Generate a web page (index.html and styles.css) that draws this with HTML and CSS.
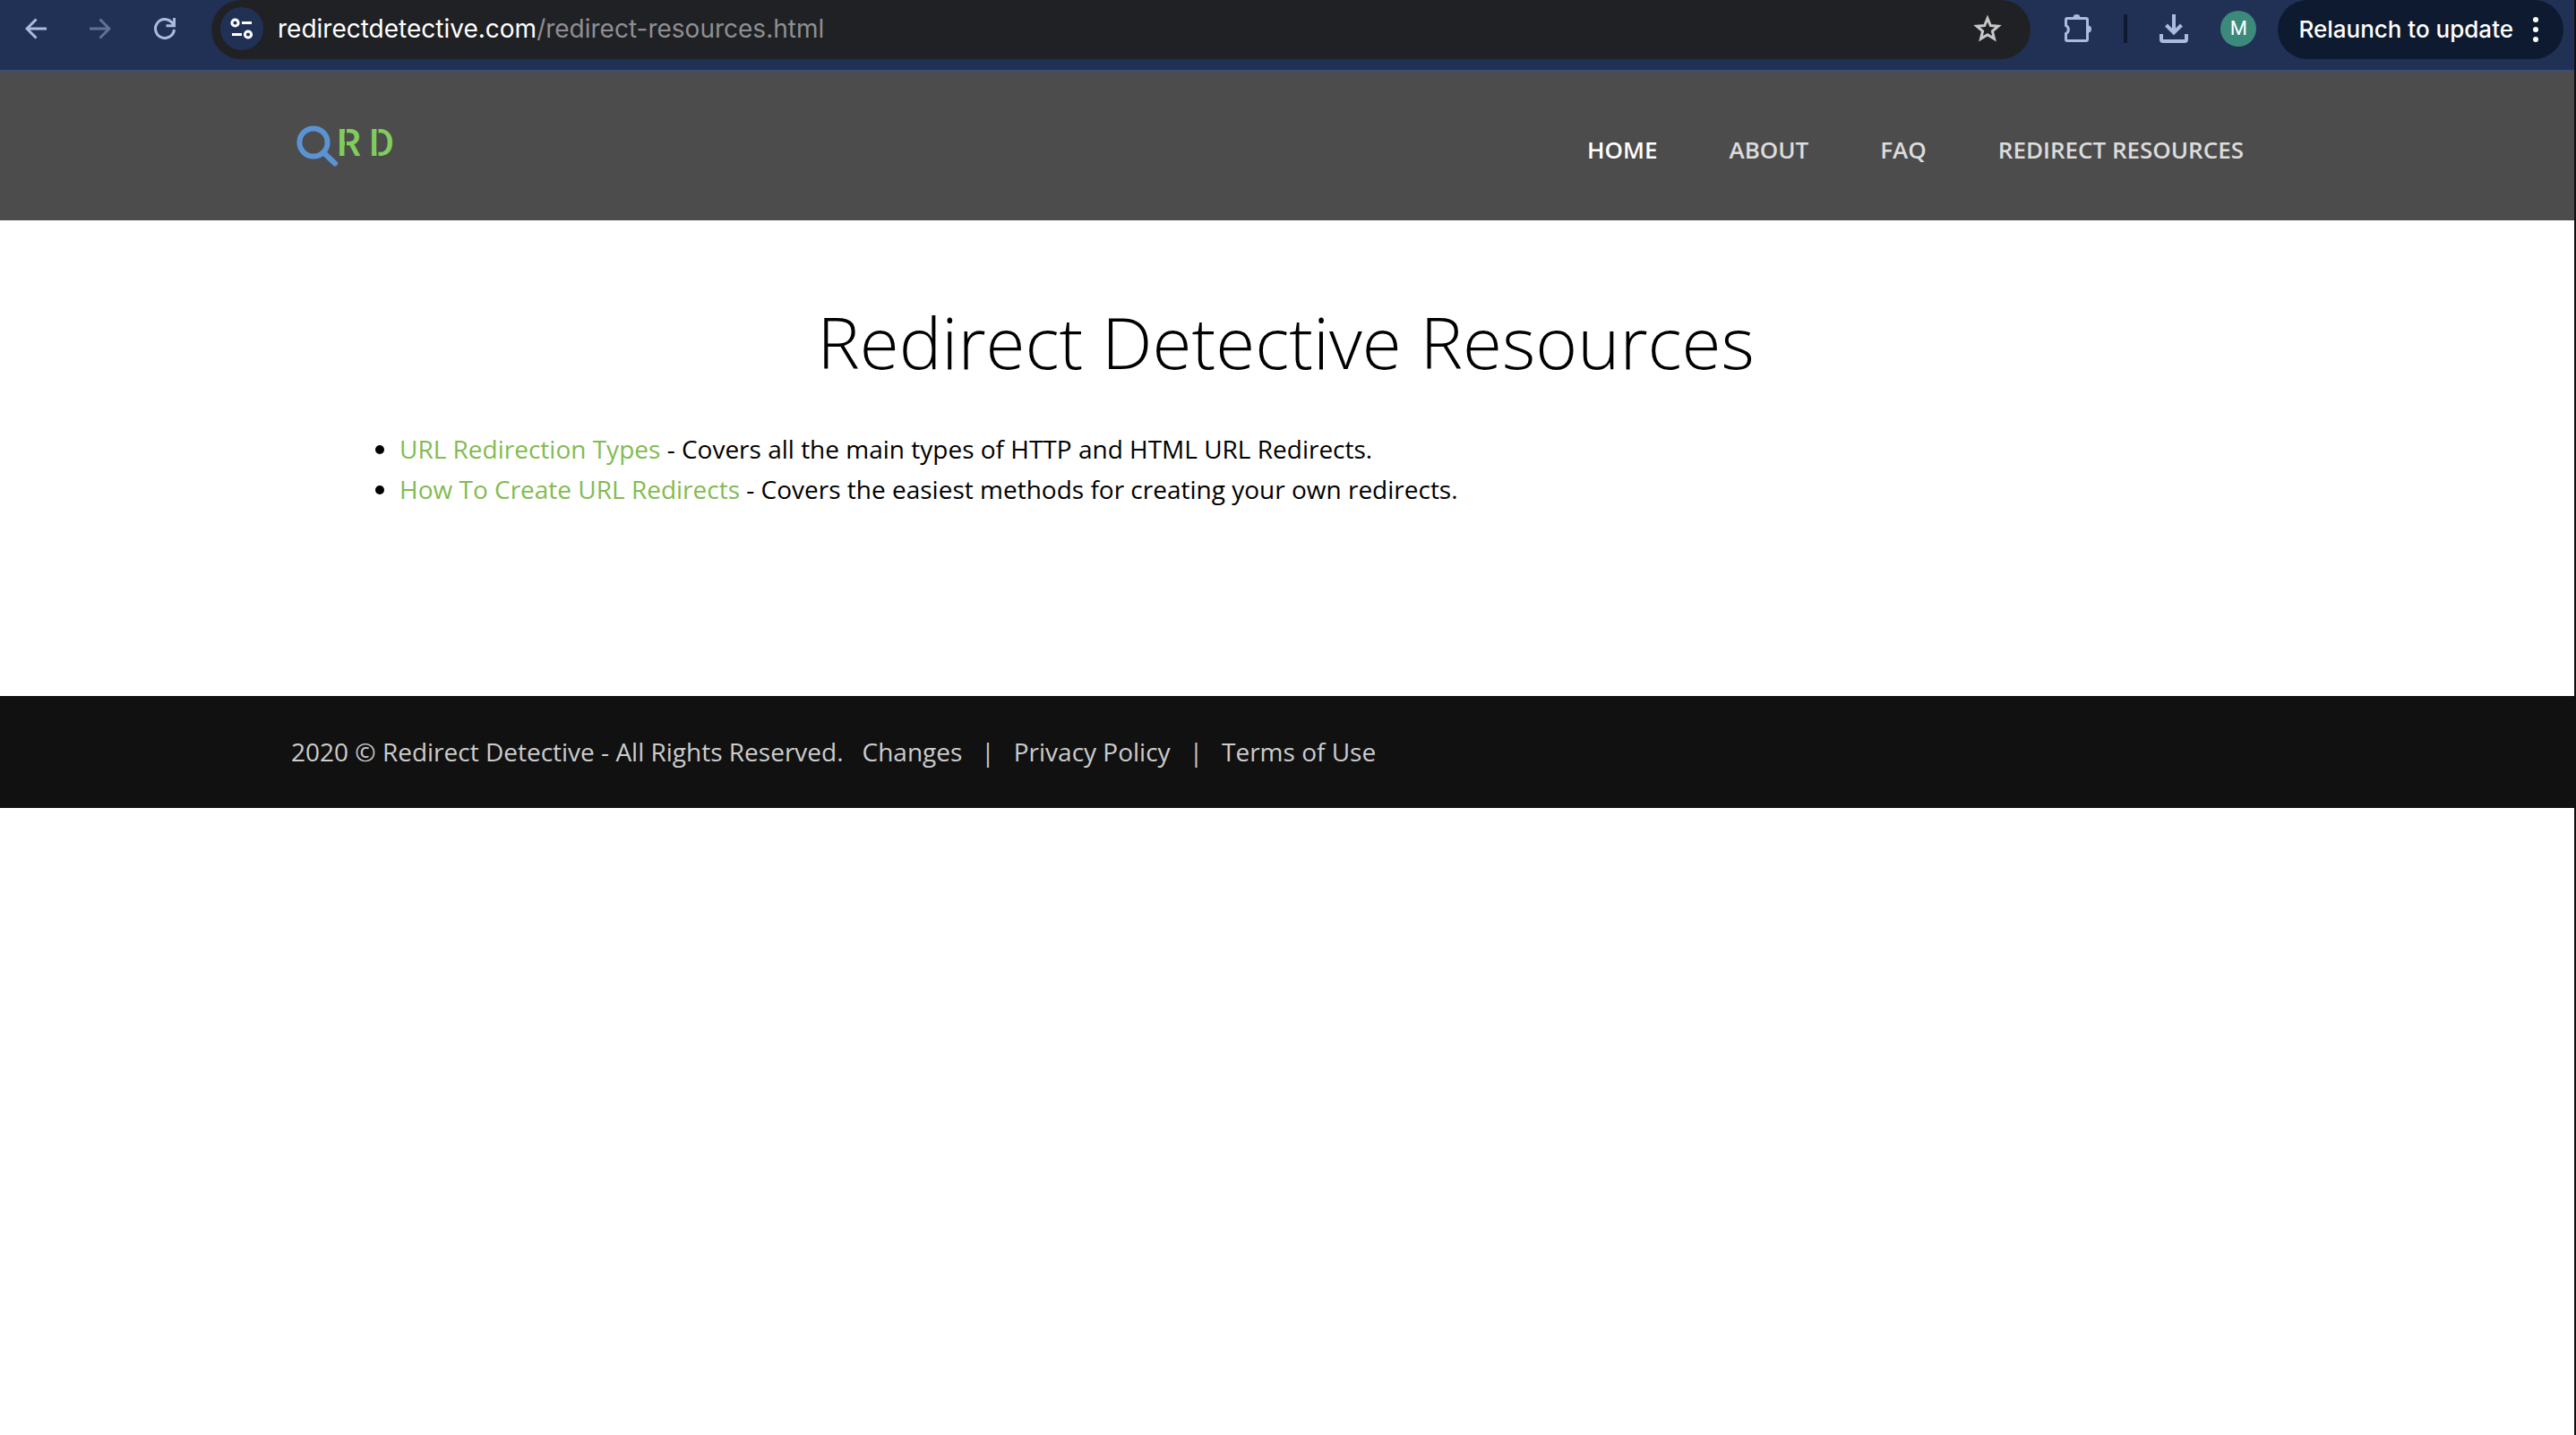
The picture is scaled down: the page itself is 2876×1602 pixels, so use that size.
FILE: index.html
```html
<!DOCTYPE html>
<html lang="en">
<head>
<meta charset="utf-8">
<title>Redirect Detective Resources</title>
<link rel="stylesheet" href="styles.css">
</head>
<body>
<div class="toolbar">
  <div class="nav-buttons">
    <button class="icon-btn" aria-label="Back"><svg width="24" height="24" viewBox="0 0 24 24"><path d="M24 12H2M12.500 1.500 2 12l10.500 10.500" /></svg></button>
    <button class="icon-btn dim" aria-label="Forward"><svg width="24" height="24" viewBox="0 0 24 24"><path d="M0 12h22M11.500 1.500 22 12 11.500 22.500" /></svg></button>
    <button class="icon-btn" aria-label="Reload"><svg width="24" height="24" viewBox="0 0 24 24"><path d="M22.500 13A10.500 10.500 0 1 1 19.500 4.600L22 7.500M22.600 0V8.700H13.500" /></svg></button>
  </div>
  <div class="omnibox">
    <button class="site-info" aria-label="Site information"><svg width="26" height="24" viewBox="0 0 26 24"><circle cx="5.500" cy="5.500" r="3.600"/><circle cx="20" cy="18.500" r="3.600"/><path d="M13 5.500h11M2 18.500h11"/></svg></button>
    <div class="url"><span class="domain">redirectdetective.com</span>/redirect-resources.html</div>
    <button class="icon-btn star" aria-label="Bookmark this page"><svg width="32" height="32" viewBox="0 0 32 32"><path d="M16 4.500 19.300 12.500 28 13.200 21.400 18.800 23.500 27.300 16 22.700 8.500 27.300 10.600 18.800 4 13.200 12.700 12.500Z"/></svg></button>
  </div>
  <div class="actions">
    <button class="icon-btn" aria-label="Extensions"><svg width="34" height="34" viewBox="0 0 34 34"><path d="M5 5.500H26a1.500 1.500 0 0 1 1.500 1.500V29a1.500 1.500 0 0 1-1.500 1.500H5A1.500 1.500 0 0 1 3.500 29V22.500a5 5 0 0 0 0-9V7A1.500 1.500 0 0 1 5 5.500Z"/><path class="solid" d="M11.500 5a4 4 0 0 1 8 0ZM28 13.500a4 4 0 0 1 0 8Z"/></svg></button>
    <span class="divider"></span>
    <button class="icon-btn bold" aria-label="Downloads"><svg width="32" height="32" viewBox="0 0 32 32"><path d="M16 0V20M7.500 12 16 20.500 24.500 12M2 22V28a2 2 0 0 0 2 2H28a2 2 0 0 0 2-2V22"/></svg></button>
    <button class="avatar" aria-label="Profile">M</button>
    <button class="relaunch">Relaunch to update<svg width="6" height="28" viewBox="0 0 6 28"><circle cx="3" cy="3" r="3"/><circle cx="3" cy="14" r="3"/><circle cx="3" cy="25" r="3"/></svg></button>
  </div>
</div>
<header class="site-header">
  <div class="container header-row">
    <a class="logo" href="#" aria-label="Redirect Detective">
      <svg width="132" height="60" viewBox="0 0 132 60">
        <circle class="lens" cx="25" cy="23" r="15.600"/>
        <path class="handle" d="M36 34 49 46.500"/>
        <text x="51" y="38">R</text><text x="87" y="38">D</text>
        <path class="cut" d="M61 4V40M96.500 4V40"/>
      </svg>
    </a>
    <nav class="menu">
      <a class="active" href="#">HOME</a>
      <a href="#">ABOUT</a>
      <a href="#">FAQ</a>
      <a href="#">REDIRECT RESOURCES</a>
    </nav>
  </div>
</header>
<main class="container">
  <h1>Redirect Detective Resources</h1>
  <ul class="resources">
    <li><a href="#">URL Redirection Types</a> - Covers all the main types of HTTP and HTML URL Redirects.</li>
    <li><a href="#">How To Create URL Redirects</a> - Covers the easiest methods for creating your own redirects.</li>
  </ul>
</main>
<footer class="site-footer">
  <div class="container footer-row">
    <span>2020 © Redirect Detective - All Rights Reserved.</span>
    <nav class="legal">
      <a href="#">Changes</a><span>|</span><a href="#">Privacy Policy</a><span>|</span><a href="#">Terms of Use</a>
    </nav>
  </div>
</footer>
</body>
</html>
```
FILE: styles.css
```css
* { box-sizing: border-box; }
html { background: #fff; }
body {
  margin: 0;
  min-height: 100vh;
  border-right: 2px solid #111;
  font: 400 28px/45px "Open Sans", sans-serif;
  color: #000;
}
a { text-decoration: none; color: inherit; }
button { border: 0; padding: 0; background: none; font: inherit; color: inherit; }
svg { display: block; }

.toolbar {
  display: flex;
  align-items: flex-start;
  height: 80px;
  background: #213156;
  border-bottom: 2px solid #3c4d72;
  font: 400 28px/36px Inter, sans-serif;
}
.nav-buttons { display: flex; gap: 48px; padding: 20px 40px 0 28px; }
.icon-btn { color: #a9bce0; }
.icon-btn svg { fill: none; stroke: currentColor; stroke-width: 3; }
.icon-btn .solid { fill: currentColor; stroke: none; }
.icon-btn.dim { color: #5f7196; }
.icon-btn.bold svg { stroke-width: 4; }
.omnibox {
  flex: 1;
  display: flex;
  align-items: center;
  height: 66px;
  padding: 0 32px 2px 10px;
  background: #202124;
  border-radius: 33px;
}
.site-info {
  display: flex;
  align-items: center;
  justify-content: center;
  width: 48px;
  height: 48px;
  border-radius: 50%;
  background: #213156;
}
.site-info svg { fill: none; stroke: #fff; stroke-width: 3; }
.url { flex: 1; margin-left: 16px; color: #8e8f93; }
.domain { color: #fff; }
.star { color: #c7c7c7; }
.actions { display: flex; align-items: center; height: 64px; padding: 0 12px 0 36px; }
.divider { width: 4px; height: 32px; margin: 0 36px 0 34px; background: #0d1a30; }
.avatar {
  width: 40px;
  height: 40px;
  margin: 0 24px 0 36px;
  border-radius: 50%;
  background: #3c8a7b;
  color: #fff;
  font: 400 22px/40px Roboto, sans-serif;
}
.relaunch {
  display: flex;
  align-items: center;
  gap: 22px;
  align-self: flex-start;
  height: 66px;
  padding: 0 28px 0 23px;
  border-radius: 33px;
  background: #0d1a30;
  color: #fff;
  font-size: 26px;
  font-weight: 500;
}
.relaunch svg { fill: #fff; }

.container { width: 78%; max-width: 2224px; margin: 0 auto; }
.site-header { background: #4c4c4c; }
.header-row { display: flex; justify-content: space-between; height: 166px; }
.logo { padding-top: 56px; }
.logo .lens { fill: none; stroke: #5b93d3; stroke-width: 6; }
.logo .handle { stroke: #5b93d3; stroke-width: 6; stroke-linecap: round; }
.logo text { fill: #80cd5c; font: 500 43px Roboto, sans-serif; }
.logo .cut { stroke: #4c4c4c; stroke-width: 2; }
.menu {
  display: flex;
  gap: 80px;
  padding: 65px 44px 0 0;
  color: #dcdcdc;
  font-size: 26px;
  font-weight: 600;
}
.menu .active { color: #fff; }

h1 {
  margin: 0;
  padding: 91px 3px 54px 0;
  font-size: 80px;
  line-height: 88px;
  font-weight: 300;
  text-align: center;
}
.resources { margin: 0; padding: 0 0 208px 121px; }
.resources a { color: #83bb50; }

.site-footer { background: #111; color: #ccc; }
.footer-row { display: flex; gap: 21px; padding: 40px 0; }
.legal { display: flex; gap: 21px; }
```
